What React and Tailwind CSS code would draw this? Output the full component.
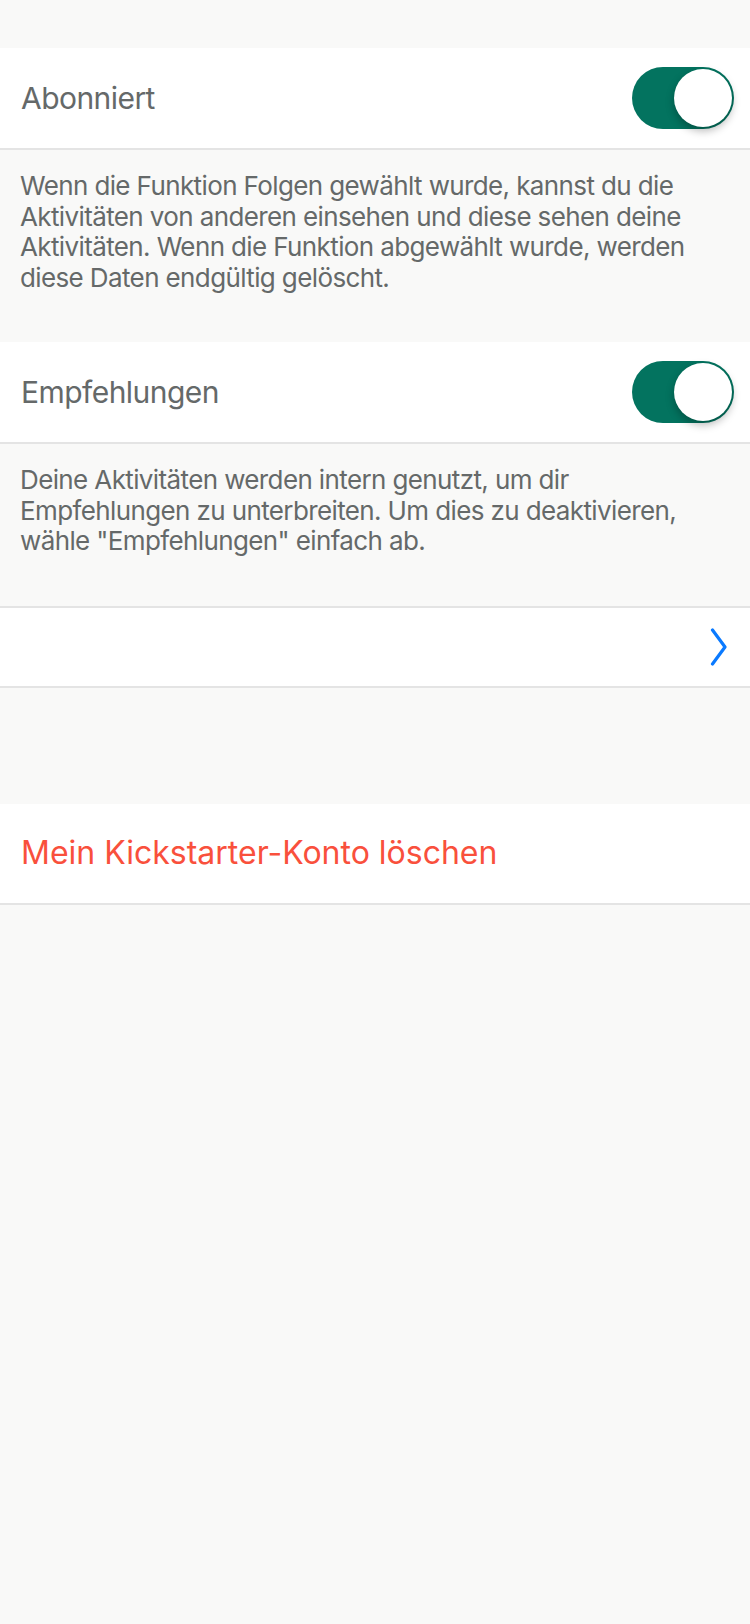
import React, { useState } from 'react';

function Toggle({ on, onChange }) {
  return (
    <button
      onClick={() => onChange(!on)}
      className={`w-[102px] h-[62px] rounded-full p-[2px] flex items-center ${on ? 'bg-[#03735f] justify-end' : 'bg-[#e5e5e5] justify-start'}`}
    >
      <span className="block w-[58px] h-[58px] rounded-full bg-white shadow-[0_4px_8px_rgba(0,0,0,0.28)]" />
    </button>
  );
}

export default function App() {
  const [following, setFollowing] = useState(true);
  const [recommendations, setRecommendations] = useState(true);

  return (
    <div className="min-h-screen bg-[#f9f9f8] text-[#656969]" style={{ fontFamily: 'Inter, "Noto Sans", sans-serif' }}>
      <div className="h-[48px]" />

      {/* Folgen */}
      <div className="h-[100px] bg-white flex items-center justify-between pl-[21px] pr-[16px] border-b-2 border-[#e4e4e4] box-content">
        <span className="text-[30px] tracking-[-0.55px]">Abonniert</span>
        <Toggle on={following} onChange={setFollowing} />
      </div>
      <div className="pl-[20px] pr-[24px] pt-[21px] pb-[49px] text-[26px] leading-[30.5px] tracking-[-0.62px] whitespace-pre-line">
        {'Wenn die Funktion Folgen gewählt wurde, kannst du die\nAktivitäten von anderen einsehen und diese sehen deine\nAktivitäten. Wenn die Funktion abgewählt wurde, werden\ndiese Daten endgültig gelöscht.'}
      </div>

      {/* Empfehlungen */}
      <div className="h-[100px] bg-white flex items-center justify-between pl-[21px] pr-[16px] border-b-2 border-[#e4e4e4] box-content">
        <span className="text-[30px] tracking-[-0.55px]">Empfehlungen</span>
        <Toggle on={recommendations} onChange={setRecommendations} />
      </div>
      <div className="pl-[20px] pr-[24px] pt-[21px] pb-[49px] text-[26px] leading-[30.5px] tracking-[-0.62px] whitespace-pre-line">
        {'Deine Aktivitäten werden intern genutzt, um dir\nEmpfehlungen zu unterbreiten. Um dies zu deaktivieren,\nwähle "Empfehlungen" einfach ab.'}
      </div>

      {/* leere Zeile mit Pfeil */}
      <div className="h-[78px] bg-white flex items-center justify-end pr-[22px] border-y-2 border-[#e4e4e4] box-content">
        <svg width="18" height="38" viewBox="0 0 18 38" fill="none">
          <path d="M2.5 2 L15 19 L2.5 36" stroke="#0a7aff" strokeWidth="3.2" strokeLinecap="round" strokeLinejoin="round" />
        </svg>
      </div>

      <div className="h-[116px]" />

      {/* Konto löschen */}
      <button className="w-full h-[99px] bg-white flex items-center pl-[21px] border-b-2 border-[#e4e4e4] box-content text-left">
        <span className="text-[32px] text-[#f9503c]">Mein Kickstarter-Konto löschen</span>
      </button>
    </div>
  );
}
